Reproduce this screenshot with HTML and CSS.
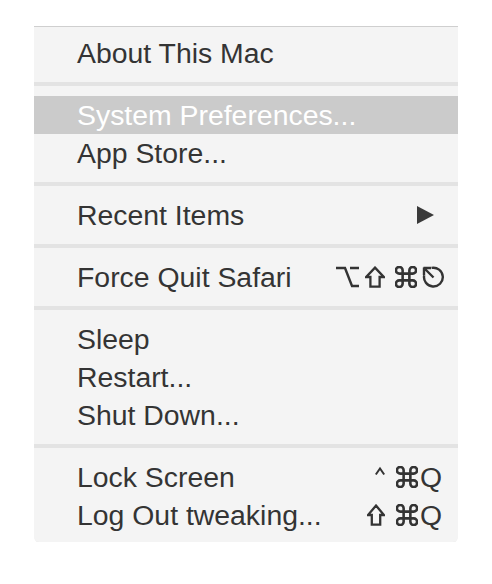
FILE: index.html
```html
<!DOCTYPE html>
<html lang="en">
<head>
<meta charset="utf-8">
<title>Apple Menu</title>
<link rel="stylesheet" href="styles.css">
</head>
<body>
<div class="menu">
  <div class="item"><span class="label">About This Mac</span></div>
  <div class="sep"></div>
  <div class="item selected"><span class="label">System Preferences...</span></div>
  <div class="item"><span class="label">App Store...</span></div>
  <div class="sep"></div>
  <div class="item"><span class="label">Recent Items</span>
    <svg class="arrow" width="18" height="18" viewBox="0 0 18 18"><polygon points="1,0 18,9 1,18" fill="#3a3a3a"/></svg>
  </div>
  <div class="sep"></div>
  <div class="item"><span class="label">Force Quit Safari</span>
    <span class="keys">
      <svg class="k-opt" width="23" height="22" viewBox="0 0 23 22"><path d="M0 2H9L16 20H23M14 2H23" fill="none" stroke="#333" stroke-width="2.4"/></svg>
      <svg class="k-shift1" width="20" height="22" viewBox="0 0 20 22"><path d="M10 1.6L18.8 11H14.6V20.6H5.4V11H1.2Z" fill="none" stroke="#333" stroke-width="2.3" stroke-linejoin="miter"/></svg>
      <svg class="k-cmd1" width="22" height="22" viewBox="2.2 2.2 19.6 19.6"><path d="M15 6v12a3 3 0 1 0 3-3H6a3 3 0 1 0 3 3V6a3 3 0 1 0-3 3h12a3 3 0 1 0-3-3" fill="none" stroke="#333" stroke-width="2.3"/></svg>
      <svg class="k-esc" width="23" height="22" viewBox="0 0 23 22"><path d="M9.5 1.9A9.4 9.4 0 1 1 2.2 9.2" fill="none" stroke="#333" stroke-width="2.4"/><path d="M1.5 2H9M2 1.5V9M2 2L11.5 11.5" fill="none" stroke="#333" stroke-width="2.4"/></svg>
    </span>
  </div>
  <div class="sep"></div>
  <div class="item"><span class="label">Sleep</span></div>
  <div class="item"><span class="label">Restart...</span></div>
  <div class="item"><span class="label">Shut Down...</span></div>
  <div class="sep"></div>
  <div class="item"><span class="label">Lock Screen</span>
    <span class="keys">
      <svg class="k-ctrl" width="10" height="22" viewBox="0 0 10 22"><path d="M0.8 8.5L5 2.4L9.2 8.5" fill="none" stroke="#333" stroke-width="2"/></svg>
      <svg class="k-cmd2" width="22" height="22" viewBox="2.2 2.2 19.6 19.6"><path d="M15 6v12a3 3 0 1 0 3-3H6a3 3 0 1 0 3 3V6a3 3 0 1 0-3 3h12a3 3 0 1 0-3-3" fill="none" stroke="#333" stroke-width="2.3"/></svg>
      <span class="q">Q</span>
    </span>
  </div>
  <div class="item"><span class="label">Log Out tweaking...</span>
    <span class="keys">
      <svg class="k-shift2" width="18" height="22" viewBox="0 0 18 22"><path d="M9 1.6L17 11H13.2V20.6H4.8V11H1Z" fill="none" stroke="#333" stroke-width="2.3"/></svg>
      <svg class="k-cmd2" width="22" height="22" viewBox="2.2 2.2 19.6 19.6"><path d="M15 6v12a3 3 0 1 0 3-3H6a3 3 0 1 0 3 3V6a3 3 0 1 0-3 3h12a3 3 0 1 0-3-3" fill="none" stroke="#333" stroke-width="2.3"/></svg>
      <span class="q">Q</span>
    </span>
  </div>
</div>
</body>
</html>
```
FILE: styles.css
```css
html, body {
  margin: 0;
  padding: 0;
  background: #ffffff;
}
body {
  padding: 26px 0 0 34px;
  font-family: "Liberation Sans", Arial, sans-serif;
}
.menu {
  width: 424px;
  background: #f4f4f4;
  border-top: 1px solid #cfcfcf;
  border-radius: 0 0 6px 6px;
  padding: 7px 0 8px;
  box-shadow: 0 1px 0 rgba(0,0,0,0.06);
}
.item {
  height: 38px;
  display: flex;
  align-items: center;
  justify-content: space-between;
  padding: 0 13px 0 43px;
  font-size: 28.4px;
  line-height: 38px;
  color: #343434;
}
.item.selected {
  background: #cbcbcb;
  color: #ffffff;
}
.sep {
  height: 4px;
  margin: 10px 0;
  background: #e3e3e3;
}
.arrow {
  margin-right: 11px;
  display: block;
}
.keys {
  display: flex;
  align-items: center;
}
.keys svg {
  display: block;
}
.k-shift1 { margin-left: 6px; }
.k-cmd1 { margin-left: 10px; }
.k-esc { margin-left: 5px; }
.k-cmd2 { margin-left: 11px; }
.k-shift2 + .k-cmd2 { margin-left: 11px; }
.q {
  margin-left: 2px;
  margin-right: 3px;
  line-height: 38px;
}
```
